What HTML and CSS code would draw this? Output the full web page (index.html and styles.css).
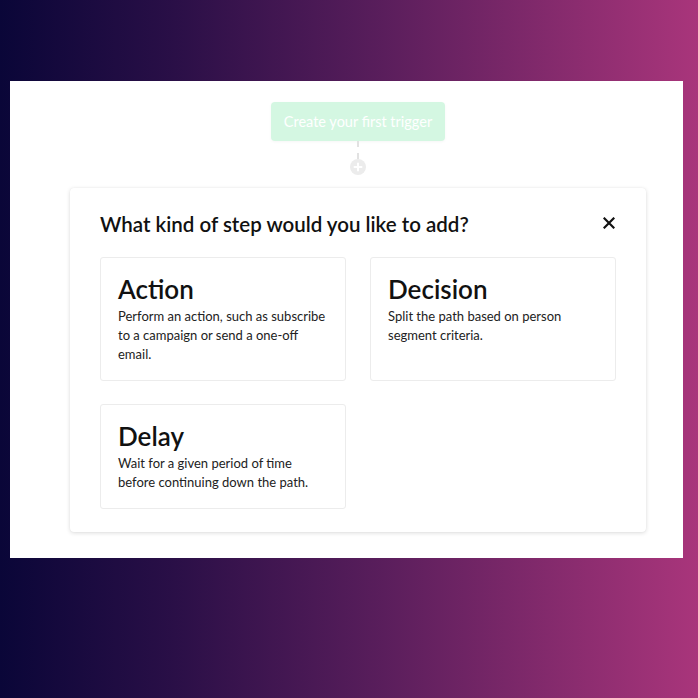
FILE: index.html
```html
<!DOCTYPE html>
<html>
<head>
<meta charset="utf-8">
<link rel="stylesheet" href="styles.css">
</head>
<body>
<div class="panel">
  <div class="column">
    <div class="trigger">Create your first trigger</div>
    <div class="connector"></div>
    <div class="add">
      <svg width="16" height="16" viewBox="0 0 16 16"><circle cx="8" cy="8" r="8" fill="#ececec"/><path d="M8 4.5v7M4.5 8h7" stroke="#fff" stroke-width="2" stroke-linecap="round"/></svg>
    </div>
    <div class="modal">
      <div class="modal-head">
        <h2 class="title">What kind of step would you like to add?</h2>
        <svg class="close" width="12" height="12" viewBox="0 0 12 12"><path d="M1.5 1.5l9 9M10.5 1.5l-9 9" stroke="#111" stroke-width="2.2" stroke-linecap="square"/></svg>
      </div>
      <div class="options">
        <div class="option">
          <h3>Action</h3>
          <p>Perform an action, such as subscribe to a campaign or send a one-off email.</p>
        </div>
        <div class="option">
          <h3>Decision</h3>
          <p>Split the path based on person segment criteria.</p>
        </div>
        <div class="option">
          <h3>Delay</h3>
          <p>Wait for a given period of time before continuing down the path.</p>
        </div>
      </div>
    </div>
  </div>
</div>
</body>
</html>
```
FILE: styles.css
```css
html, body { margin: 0; padding: 0; }
body {
  width: 698px;
  height: 698px;
  background: linear-gradient(90deg, #0a0638 0%, #2a0f47 25%, #5a1e5c 55%, #a9357b 100%);
  font-family: Lato, "Noto Sans", sans-serif;
  color: #1a1a1a;
  padding-top: 81px;
  padding-left: 10px;
  box-sizing: border-box;
}
.panel {
  width: 673px;
  height: 477px;
  background: #fff;
  padding-left: 60px;
  padding-top: 21px;
  box-sizing: border-box;
}
.column {
  width: 576px;
  display: flex;
  flex-direction: column;
  align-items: center;
}
.trigger {
  width: 174px;
  height: 39px;
  border-radius: 4px;
  background: #d4f7e2;
  color: #fff;
  font-size: 14.5px;
  display: flex;
  align-items: center;
  justify-content: center;
  box-shadow: 0 1px 3px rgba(0,0,0,0.04);
}
.connector {
  width: 0;
  height: 18px;
  border-left: 2px dashed #e2e2e2;
}
.add { height: 16px; display: flex; }
.modal {
  margin-top: 13px;
  width: 576px;
  box-sizing: border-box;
  background: #fff;
  border-radius: 4px;
  box-shadow: 0 1px 4px rgba(0,0,0,0.14), 0 0 1px rgba(0,0,0,0.08);
  padding: 24px 30px 23px 30px;
}
.modal-head {
  display: flex;
  align-items: center;
  justify-content: space-between;
}
.title {
  margin: 0;
  font-size: 20.5px;
  line-height: 24px;
  font-weight: 600;
  color: #111;
}
.close { margin-top: -2px; margin-right: 1px; }
.options {
  margin-top: 21px;
  display: grid;
  grid-template-columns: 246px 246px;
  gap: 23px 24px;
}
.option {
  border: 1px solid #ececec;
  border-radius: 3px;
  padding: 15px 17px 16px 17px;
}
.option h3 {
  margin: 0;
  font-size: 26px;
  line-height: 32px;
  font-weight: 600;
  color: #111;
}
.option p {
  margin: 2px 0 0 0;
  font-size: 13px;
  line-height: 19px;
  color: #222;
}
```
